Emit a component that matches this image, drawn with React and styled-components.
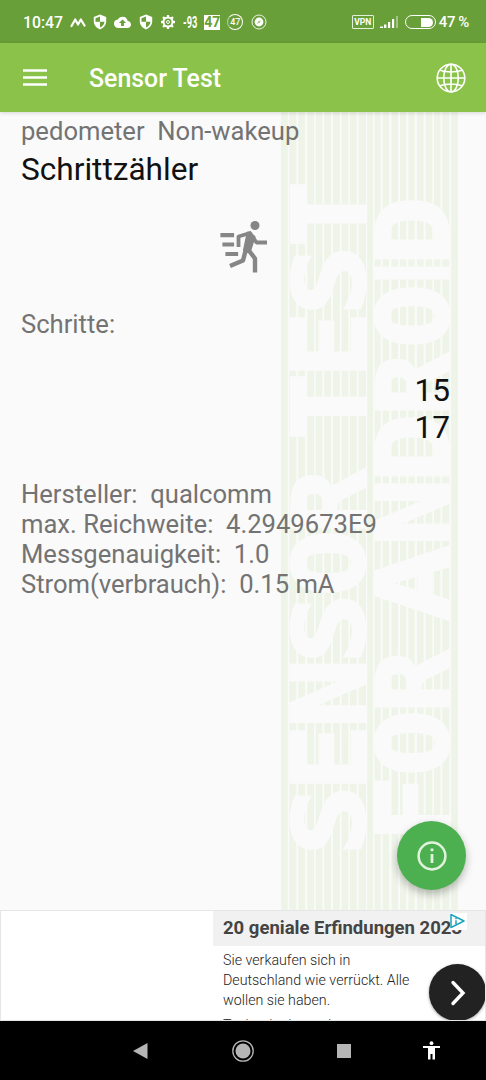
import React from 'react'
import styled, { createGlobalStyle } from 'styled-components'

const GlobalStyle = createGlobalStyle`
  body {
    margin: 0;
    background: #fafafa;
    font-family: Roboto, 'Liberation Sans', sans-serif;
  }
  * {
    box-sizing: border-box;
  }
  svg {
    display: block;
    flex: none;
  }
`

// letter, bottom, top
const lineOne = [
  ['S', 850, 790], ['E', 784, 730], ['N', 724, 663], ['S', 658, 598], ['O', 593, 533], ['R', 529, 467],
  ['T', 437, 376], ['E', 371, 317], ['S', 310, 250], ['T', 244, 184],
]
const lineTwo = [
  ['F', 835, 780], ['O', 773, 713], ['R', 708, 648],
  ['A', 622, 545], ['N', 542, 483], ['D', 477, 417], ['R', 411, 351], ['O', 345, 287], ['I', 280, 266], ['D', 260, 200],
]
const stripes = [
  [281, 6.5], [289.3, 7], [298.3, 6.7], [307.3, 6.7], [315.7, 6.6], [324.3, 6.7], [333, 6.7], [341.7, 6.6], [350, 6.7], [358.7, 7.3],
  [367.5, 5.2], [374.6, 6], [382.7, 6.3], [391.6, 6.4], [400, 6.3], [408.3, 6.4], [417, 6.7], [425.7, 6.6], [434, 6.3], [442.3, 7],
  [451.3, 6.7],
]

const capHeight = 77
const outline = 3
const context = document.createElement('canvas').getContext('2d')

// every capital is stretched to fill its own slot exactly
const Letters = ({ items, x }) => items.map(([char, bottom, top]) => {
  const family = char === 'I' ? 'DejaVu Sans' : 'DejaVu Sans Mono'
  context.font = `700 100px "${family}"`
  const box = context.measureText(char)
  const width = box.actualBoundingBoxRight + box.actualBoundingBoxLeft
  const height = box.actualBoundingBoxAscent + box.actualBoundingBoxDescent
  const scaleX = (bottom - top - outline) / width
  const scaleY = (capHeight - outline) / height
  return (
    <text
      key={bottom}
      fontFamily={family}
      fontSize="100"
      transform={`translate(${x - outline / 2} ${bottom - outline / 2}) rotate(-90) scale(${scaleX} ${scaleY}) translate(${box.actualBoundingBoxLeft} ${-box.actualBoundingBoxDescent})`}
    >{char}</text>
  )
})

const Watermark = () => (
  <WatermarkSvg width="178" height="798" viewBox="281 112 178 798">
    {stripes.map(([x, width]) => <rect key={x} x={x} y="112" width={width} height="798" fill="#eef4e7" />)}
    <Letters items={lineOne} x={366} />
    <Letters items={lineTwo} x={450} />
    <path d="M281 112h6.500v798H281zM367.500 112h5.200v798h-5.200zM451.300 112h6.700v798h-6.700z" fill="#eef4e7" />
  </WatermarkSvg>
)

const Shield = () => (
  <svg width="14" height="16" viewBox="0 0 14 16">
    <path d="M7 .5 13.2 3v4.3c0 3.8-2.5 6.7-6.2 8.2C3.300 14 .8 11.100.8 7.300V3z" fill="#fff" />
    <path d="M7 2.500v5.300H2.500V4.300zM7 7.800h4.500c-.3 2.600-1.900 4.600-4.500 5.800z" fill="#689f38" />
  </svg>
)

const App = () => (
  <Screen>
    <GlobalStyle />
    <StatusBar>
      <Clock>10:47</Clock>
      <StatusIcons>
        <svg width="16" height="12" viewBox="0 0 16 12">
          <path d="M1.500 10 5.200 3.500l2.800 5 2.800-5L14.500 9.500" fill="none" stroke="#fff" strokeWidth="2.200" strokeLinejoin="round" strokeLinecap="round" />
        </svg>
        <Shield />
        <svg width="17" height="14" viewBox="0 2 24 19">
          <path d="M19.350 10.040A7.490 7.490 0 0 0 12 4C9.110 4 6.600 5.640 5.350 8.040A5.994 5.994 0 0 0 0 14c0 3.310 2.690 6 6 6h13c2.760 0 5-2.240 5-5 0-2.640-2.050-4.780-4.650-4.960zM14 13v4h-4v-4H7l5-5 5 5h-3z" fill="#fff" />
        </svg>
        <Shield />
        <svg width="16" height="16" viewBox="0 0 16 16" fill="none" stroke="#fff">
          <circle cx="8" cy="8" r="4.500" strokeWidth="2" />
          <path d="M8 1v2M8 13v2M1 8h2M13 8h2M3.050 3.050l1.400 1.400M11.550 11.550l1.400 1.400M3.050 12.950l1.400-1.400M11.550 4.450l1.400-1.400" strokeWidth="2.300" />
          <circle cx="8" cy="8" r="1.500" strokeWidth="1" />
        </svg>
        <Signal>-93</Signal>
        <BatteryTile>47</BatteryTile>
        <BatteryRing>47</BatteryRing>
        <svg width="16" height="16" viewBox="0 0 16 16">
          <circle cx="8" cy="8" r="7" fill="none" stroke="#fff" strokeOpacity=".85" />
          <circle cx="8" cy="8" r="4.400" fill="#fff" />
          <path d="m6 9.700 1.300-2.500L10 6.300 8.700 8.800z" fill="#a5c788" />
        </svg>
      </StatusIcons>
      <Vpn>VPN</Vpn>
      <svg width="19" height="14" viewBox="0 0 19 14" fill="#fff">
        <path d="M0 11.500h3V13H0zM4 9.500h2.400V13H4zM8 7h2.200v6H8zM12 4h2.200v9H12z" />
        <path d="M16 1h2v12h-2z" opacity=".4" />
      </svg>
      <Battery />
      <Percent>47 %</Percent>
    </StatusBar>
    <AppBar>
      <svg width="24" height="18" viewBox="0 0 24 18">
        <path d="M0 1.500h24M0 8.500h24M0 15.500h24" stroke="#fff" strokeWidth="2.300" />
      </svg>
      <Title>Sensor Test</Title>
      <svg width="30" height="30" viewBox="0 0 30 30" fill="none" stroke="#fff" strokeWidth="1.600">
        <circle cx="15" cy="15" r="13.800" />
        <ellipse cx="15" cy="15" rx="7.300" ry="13.800" />
        <path d="M15 1.200v27.600M1.200 15h27.600M4 7.300c6 2.300 16 2.300 22 0M4 22.700c6-2.300 16-2.300 22 0" />
      </svg>
    </AppBar>
    <Content>
      <Watermark />
      <Line>pedometer  Non-wakeup</Line>
      <Heading>Schrittzähler</Heading>
      <RunnerRow>
        <svg width="50" height="54" viewBox="0 0 50 54" fill="none" stroke="#868686" strokeLinejoin="round">
          <circle cx="37" cy="5.500" r="4.500" fill="#868686" stroke="none" />
          <path d="M4.500 15.200H14M6.500 24.500H14M9.500 34H18" strokeWidth="4.200" strokeLinecap="square" />
          <path d="M20.500 27V16.500L32 13l6.500 9.500h10.500" strokeWidth="3.800" />
          <path d="m30 13-3.500 17 5 1 4.500-14z" fill="#868686" strokeWidth="3" />
          <path d="m28 29-3 11.500L12 46M30.500 30l6.500 8.500V52.500" strokeWidth="4.400" />
        </svg>
      </RunnerRow>
      <Line>Schritte:</Line>
      <Counts>
        <div>15</div>
        <div>17</div>
      </Counts>
      <Line>Hersteller:  qualcomm</Line>
      <Line>max. Reichweite:  4.2949673E9</Line>
      <Line>Messgenauigkeit:  1.0</Line>
      <Line>Strom(verbrauch):  0.15 mA</Line>
      <Fab>
        <svg width="30" height="30" viewBox="0 0 30 30">
          <circle cx="15" cy="15" r="13.400" fill="none" stroke="#e2f3dc" strokeWidth="2.500" />
          <path d="M13.600 7.500h2.800v2.800h-2.800zM13.600 13h2.800v9h-2.800z" fill="#e2f3dc" />
        </svg>
      </Fab>
    </Content>
    <Ad>
      <AdBody>
        <AdTitle>20 geniale Erfindungen 2023</AdTitle>
        <AdText>
          Sie verkaufen sich in<br />Deutschland wie verrückt. Alle<br />wollen sie haben.
        </AdText>
        <AdText>Technologietrends</AdText>
      </AdBody>
      <AdChoices>
        <svg width="15" height="16" viewBox="0 0 15 16" fill="none" stroke="#18a5bd">
          <path d="M1 1.500v13L14 8z" strokeWidth="1.500" strokeLinejoin="round" />
          <path d="M6 4.800v1.500M6 7.300v4" strokeWidth="1.500" />
        </svg>
      </AdChoices>
      <AdArrow>
        <svg width="16" height="26" viewBox="0 0 16 26">
          <path d="m3 2.500 10 10.500L3 23.500" fill="none" stroke="#fff" strokeWidth="3.400" strokeLinecap="round" />
        </svg>
      </AdArrow>
    </Ad>
    <NavBar>
      <svg width="15" height="18" viewBox="0 0 15 18"><path d="M0 9 14.500 1v16z" fill="#b5b5b5" /></svg>
      <Home width="22" height="22" viewBox="0 0 22 22">
        <circle cx="11" cy="11" r="10.200" fill="none" stroke="#b5b5b5" strokeWidth="1.300" />
        <circle cx="11" cy="11" r="7.500" fill="#b5b5b5" />
      </Home>
      <Recent />
      <svg width="17" height="19" viewBox="0 0 17 19" fill="#fff">
        <circle cx="8.500" cy="2.200" r="1.900" />
        <path d="M0 5h17v2h-5v11.500H9.500V13h-2v5.500H5V7H0z" />
      </svg>
    </NavBar>
  </Screen>
)
export default App

const Screen = styled.div`
  width: 486px;
  height: 1080px;
  display: flex;
  flex-direction: column;
  overflow: hidden;
  background: #fafafa;
`

const StatusBar = styled.div`
  flex: none;
  height: 43px;
  padding: 1px 17px 0 23px;
  display: flex;
  align-items: center;
  background: #689f38;
  color: #fff;
`

const Clock = styled.div`
  width: 47px;
  font-size: 15.800px;
  font-weight: 500;
`

const StatusIcons = styled.div`
  flex: 1;
  display: flex;
  align-items: center;
  gap: 7.200px;
`

const Signal = styled.div`
  width: 14px;
  white-space: nowrap;
  font-size: 16px;
  font-weight: 700;
  transform: scaleX(.58);
  transform-origin: left;
`

const BatteryTile = styled.div`
  width: 16px;
  height: 15px;
  background: #fff;
  color: #689f38;
  font-size: 14px;
  font-weight: 700;
  line-height: 15px;
  text-align: center;
`

const BatteryRing = styled.div`
  width: 16px;
  height: 16px;
  border: 1px solid #fff;
  border-left-color: rgba(255, 255, 255, .5);
  border-radius: 50%;
  font-size: 9px;
  font-weight: 500;
  line-height: 14px;
  text-align: center;
`

const Vpn = styled.div`
  width: 22px;
  height: 14px;
  margin-right: 6px;
  border: 1px solid #e4f0da;
  border-radius: 1px;
  font-size: 8.500px;
  font-weight: 700;
  line-height: 12px;
  text-align: center;
`

const Battery = styled.div`
  width: 31px;
  height: 14px;
  margin: 0 3px 0 6px;
  padding: 1.500px;
  border: 1px solid #fff;
  border-radius: 7px;
  &:before {
    content: '';
    display: block;
    width: 12px;
    height: 9px;
    margin-left: auto;
    border-radius: 0 5px 5px 0;
    background: #fff;
  }
`

const Percent = styled.div`
  font-size: 15px;
  font-weight: 500;
  letter-spacing: -.4px;
  white-space: nowrap;
`

const AppBar = styled.div`
  flex: none;
  position: relative;
  z-index: 1;
  height: 69px;
  padding: 0 20px 0 23px;
  display: flex;
  align-items: center;
  background: #8bc34a;
  box-shadow: 0 1px 4px rgba(0, 0, 0, .15);
`

const Title = styled.div`
  flex: 1;
  margin-left: 42px;
  padding-top: 2px;
  color: #fff;
  font-size: 24.900px;
  font-weight: 500;
`

const Content = styled.div`
  flex: none;
  position: relative;
  z-index: 0;
  height: 798px;
  padding: 4px 36px 0 21px;
`

const WatermarkSvg = styled.svg`
  position: absolute;
  z-index: -1;
  left: 281px;
  top: 0;
  overflow: visible;
  text {
    fill: #fafafa;
    stroke: #fafafa;
    stroke-width: ${outline}px;
    vector-effect: non-scaling-stroke;
    font-weight: 700;
  }
`

const Line = styled.div`
  color: #737373;
  font-size: 25.600px;
  line-height: 30.100px;
  white-space: pre;
`

const Heading = styled.div`
  margin-top: 5px;
  color: #111;
  font-size: 31.600px;
  line-height: 37px;
`

const RunnerRow = styled.div`
  height: 120.500px;
  padding: 32px 0 0 197px;
`

const Counts = styled.div`
  padding: 33px 0;
  color: #111;
  font-size: 31.600px;
  line-height: 37px;
  text-align: right;
`

const Fab = styled.div`
  position: absolute;
  left: 397px;
  top: 709px;
  width: 69px;
  height: 69px;
  border-radius: 50%;
  display: flex;
  align-items: center;
  justify-content: center;
  background: #4caf50;
  box-shadow: 0 4px 8px rgba(0, 0, 0, .28);
`

const Ad = styled.div`
  flex: none;
  position: relative;
  height: 111px;
  padding-left: 212px;
  border: 1px solid #e6e6e6;
  background: #fff;
  overflow: hidden;
`

const AdBody = styled.div`
  color: #444;
`

const AdTitle = styled.div`
  height: 35px;
  padding-left: 10px;
  background: #f1f1f1;
  font-size: 18.500px;
  font-weight: 700;
  line-height: 34px;
  white-space: nowrap;
`

const AdText = styled.div`
  padding: 4px 0 0 10px;
  font-size: 14.250px;
  font-weight: 300;
  line-height: 20px;
  color: #222;
  & + & {
    padding-top: 5px;
  }
`

const AdChoices = styled.div`
  position: absolute;
  left: 449px;
  top: 2px;
  width: 17px;
  height: 17px;
  background: #fff;
`

const AdArrow = styled.div`
  position: absolute;
  left: 428px;
  top: 53px;
  width: 57px;
  height: 57px;
  border-radius: 50%;
  display: flex;
  align-items: center;
  justify-content: center;
  background: #222;
  box-shadow: 0 1px 3px rgba(0, 0, 0, .4);
`

const NavBar = styled.div`
  flex: 1;
  display: flex;
  align-items: center;
  padding: 0 46px 0 133px;
  background: #000;
`

const Home = styled.svg`
  margin-left: 84px;
`

const Recent = styled.div`
  width: 14px;
  height: 14px;
  margin: 0 auto 0 83px;
  background: #b5b5b5;
`
